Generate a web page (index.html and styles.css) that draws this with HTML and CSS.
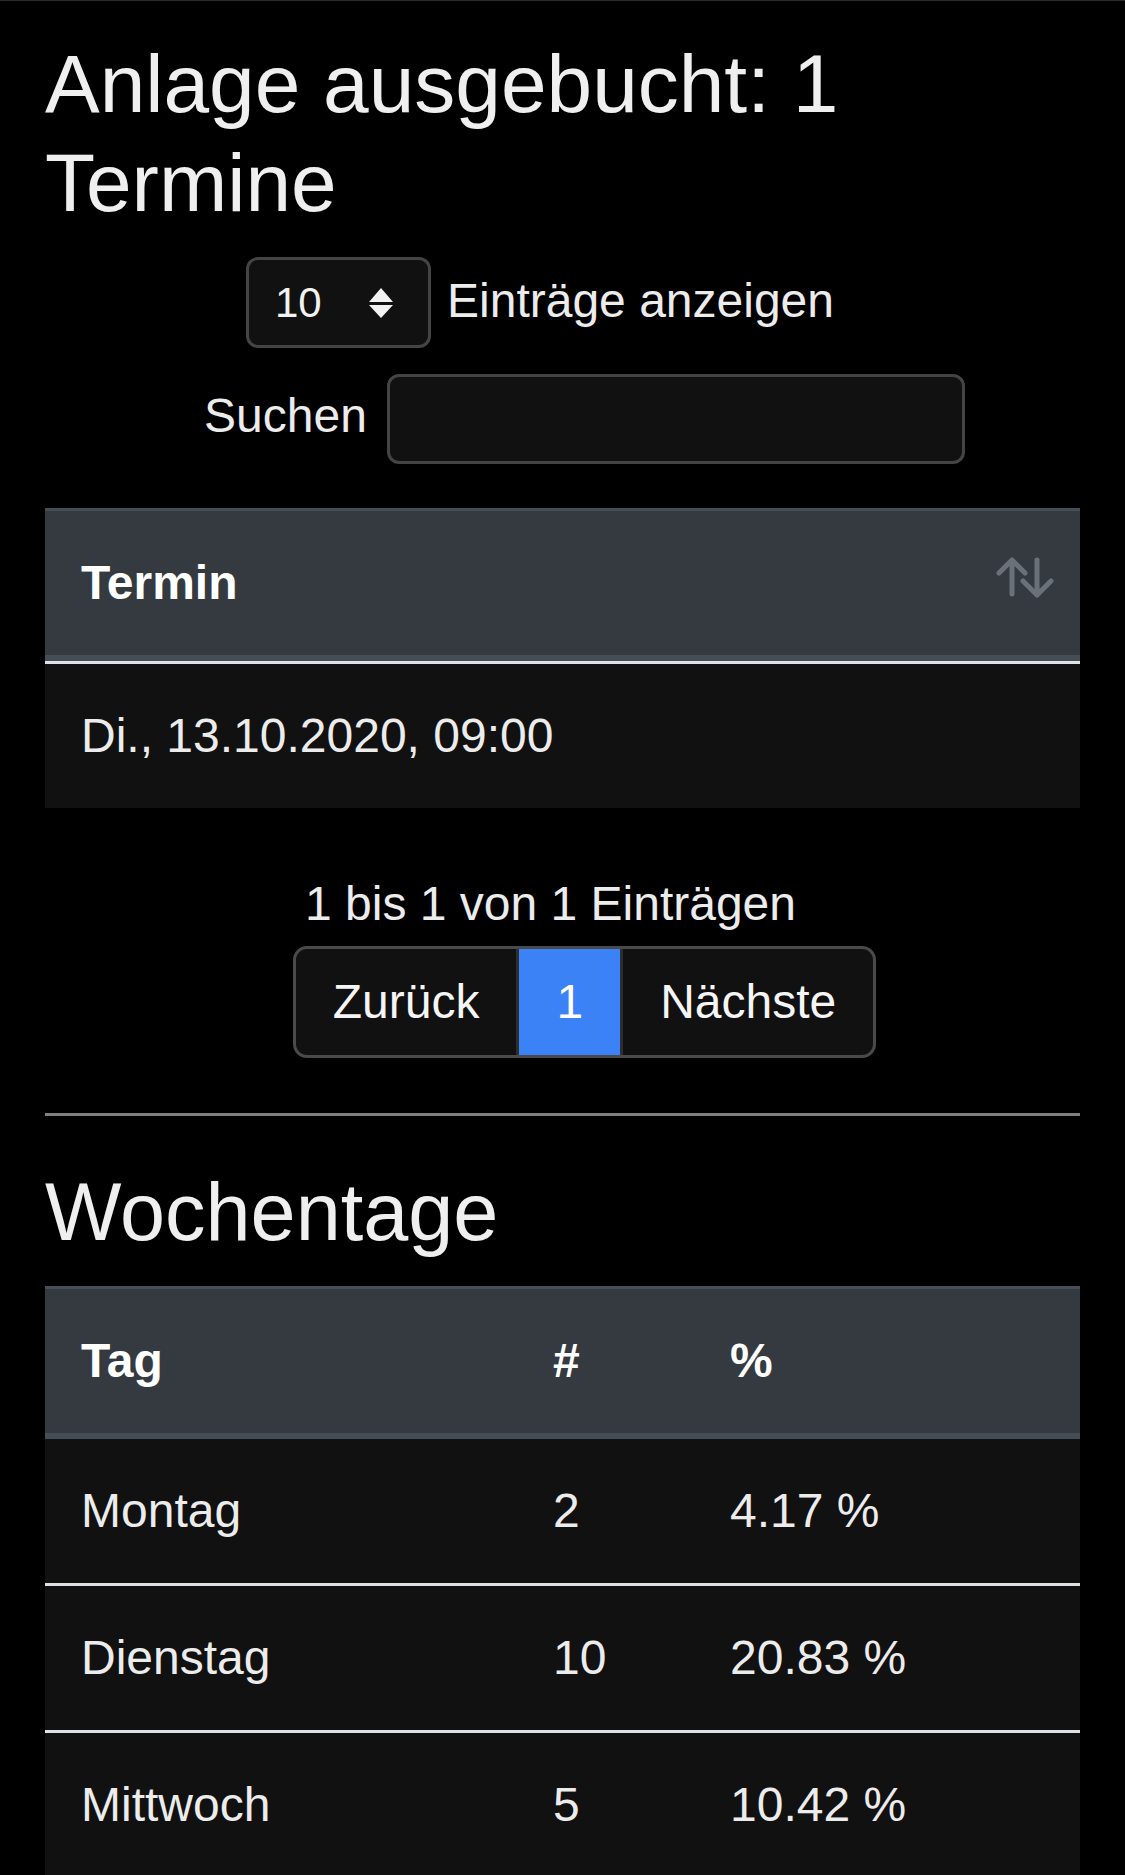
FILE: index.html
```html
<!DOCTYPE html>
<html lang="de">
<head>
  <meta charset="UTF-8">
  <meta name="viewport" content="width=device-width, initial-scale=1.0">
  <title>Anlage ausgebucht</title>
  <link rel="stylesheet" href="styles.css">
</head>
<body>
  <main class="container">
    <h1>Anlage ausgebucht: 1 Termine</h1>

    <div class="length">
      <div class="select">
        <span>10</span>
        <svg width="24" height="30" viewBox="0 0 24 30"><path d="M12 0L24 14H0Z M0 17H24L12 30Z" fill="#f2f2f2"/></svg>
      </div>
      <span>Einträge anzeigen</span>
    </div>

    <div class="search">
      <span>Suchen</span>
      <input type="search" aria-label="Suchen">
    </div>

    <table class="table table-data">
      <thead>
        <tr>
          <th>
            <div class="sortable">
              <span>Termin</span>
              <svg class="sort" width="60" height="44" viewBox="0 0 60 44" fill="none" stroke="#6b7178" stroke-width="5" stroke-linecap="round" stroke-linejoin="round">
                <path d="M18 5V39M5 18L18 5L31 18"/>
                <path d="M43 5V40M29 26L43 40L57 26"/>
              </svg>
            </div>
          </th>
        </tr>
      </thead>
      <tbody>
        <tr>
          <td>Di., 13.10.2020, 09:00</td>
        </tr>
      </tbody>
    </table>

    <div class="info">1 bis 1 von 1 Einträgen</div>
    <div class="paging">
      <div class="pager">
        <a href="#">Zurück</a>
        <a href="#" class="active">1</a>
        <a href="#">Nächste</a>
      </div>
    </div>

    <hr>

    <h2>Wochentage</h2>
    <table class="table table-stats">
      <colgroup>
        <col class="col-day">
        <col class="col-count">
        <col>
      </colgroup>
      <thead>
        <tr>
          <th>Tag</th>
          <th>#</th>
          <th>%</th>
        </tr>
      </thead>
      <tbody>
        <tr>
          <td>Montag</td>
          <td>2</td>
          <td>4.17 %</td>
        </tr>
        <tr>
          <td>Dienstag</td>
          <td>10</td>
          <td>20.83 %</td>
        </tr>
        <tr>
          <td>Mittwoch</td>
          <td>5</td>
          <td>10.42 %</td>
        </tr>
      </tbody>
    </table>
  </main>
</body>
</html>
```

FILE: styles.css
```css
body {
  margin: 0;
  border-top: 1px solid #2a2a2a;
  background-color: #000;
  color: #ececec;
  font-family: "Liberation Sans", Arial, sans-serif;
  font-size: 48px;
  line-height: 1.5;
}

.container {
  padding: 0 45px;
}

h1 {
  margin: 33px 0 25px;
  font-size: 82px;
  line-height: 99px;
  font-weight: 400;
  color: #efefef;
}

h2 {
  margin: 0 0 25px;
  font-size: 81px;
  line-height: 1.2;
  font-weight: 400;
  color: #efefef;
}

.length {
  display: flex;
  justify-content: center;
  align-items: baseline;
  gap: 16px;
  padding-right: 45px;
}

.select {
  display: flex;
  align-items: center;
  box-sizing: border-box;
  width: 185px;
  height: 91px;
  padding: 0 35px 0 26px;
  border: 3px solid #444;
  border-radius: 12px;
  background-color: #111;
  font-size: 42px;
  line-height: 63px;
  color: #f2f2f2;
}

.select svg {
  margin-left: auto;
}

.search {
  display: flex;
  justify-content: center;
  align-items: center;
  gap: 20px;
  margin-top: 26px;
  padding-left: 44px;
}

.search span {
  margin-bottom: 6px;
}

.search input {
  box-sizing: border-box;
  width: 578px;
  height: 90px;
  padding: 0 24px;
  border: 3px solid #444;
  border-radius: 12px;
  background-color: #111;
  color: #ececec;
  font: inherit;
}

.table {
  width: 100%;
  border-spacing: 0;
}

.table th,
.table td {
  padding: 36px;
  text-align: left;
  vertical-align: top;
}

.table th {
  background-color: #343a40;
  border-top: 3px solid #454d55;
  border-bottom: 6px solid #454d55;
  color: #fff;
  font-weight: 700;
}

.table td {
  background-color: #111;
  border-top: 3px solid #dee2e6;
}

.table-data {
  border-collapse: separate;
  margin: 44px 0 18px;
}

.table-stats {
  border-collapse: collapse;
  table-layout: fixed;
}

.table-stats tr:last-child td {
  border-bottom: 3px solid #dee2e6;
}

.col-day {
  width: 472px;
}

.col-count {
  width: 177px;
}

.sortable {
  display: flex;
  justify-content: space-between;
  align-items: flex-start;
}

.sort {
  margin: 8px -10px 0 0;
}

.info {
  padding: 42px 24px 0 0;
  text-align: center;
}

.paging {
  display: flex;
  justify-content: center;
  margin-top: 6px;
  padding-left: 44px;
}

.pager {
  display: flex;
  border: 3px solid #4a4a4a;
  border-radius: 14px;
  overflow: hidden;
  background-color: #111;
}

.pager a {
  padding: 23px 37px;
  line-height: 60px;
  color: #f5f5f5;
  text-decoration: none;
}

.pager a + a {
  border-left: 3px solid #2e2e2e;
}

.pager .active {
  background-color: #3b82f6;
  color: #fff;
}

hr {
  margin: 55px 0 48px;
  border: 0;
  border-top: 3px solid #808080;
}
```
